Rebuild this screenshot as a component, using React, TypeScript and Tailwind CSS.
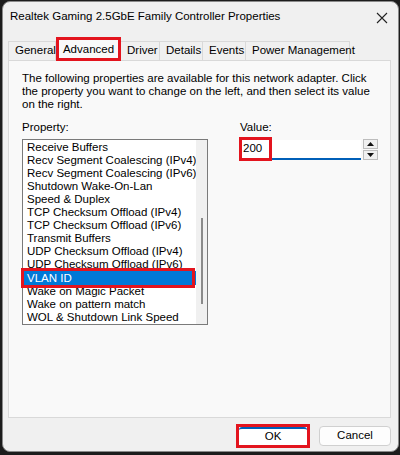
const items = [
  "Receive Buffers",
  "Recv Segment Coalescing (IPv4)",
  "Recv Segment Coalescing (IPv6)",
  "Shutdown Wake-On-Lan",
  "Speed & Duplex",
  "TCP Checksum Offload (IPv4)",
  "TCP Checksum Offload (IPv6)",
  "Transmit Buffers",
  "UDP Checksum Offload (IPv4)",
  "UDP Checksum Offload (IPv6)",
  "VLAN ID",
  "Wake on Magic Packet",
  "Wake on pattern match",
  "WOL & Shutdown Link Speed",
];

const tabs = [
  { name: "General", w: "w-[48px]" },
  { name: "Advanced", w: "w-[65px]", active: true },
  { name: "Driver", w: "w-[40px]" },
  { name: "Details", w: "w-[44px]" },
  { name: "Events", w: "w-[44px]" },
  { name: "Power Management", w: "w-[105px]" },
];

export default function App() {
  return (
    <div className="h-[455px] w-[400px] bg-[#1c1c1c] pb-[3px] pl-[2px] pr-[1px] pt-[1px] font-['Liberation_Sans',sans-serif] text-[11.5px] text-black">
      <div className="flex h-full flex-col rounded-[8px] border border-[#8a8a8a] bg-[#f0f0f0]">
        {/* title bar */}
        <div className="flex h-[30px] items-center justify-between pl-[7px] pr-[10px]">
          <span className="whitespace-nowrap text-[11.5px]">Realtek Gaming 2.5GbE Family Controller Properties</span>
          <svg width="12" height="12" viewBox="0 0 12 12" className="mt-[1px]">
            <path d="M1 1L11 11M11 1L1 11" stroke="#222" strokeWidth="1.1" />
          </svg>
        </div>

        {/* tabs */}
        <div className="ml-[5px] mt-[5px] flex h-[23px] items-end">
          {tabs.map((t) =>
            t.active ? (
              <div
                key={t.name}
                className={`relative z-10 -mb-[1px] flex h-[24px] ${t.w} items-start justify-center whitespace-nowrap border-[3px] border-[#e3141e] bg-[#f9f9f9] pt-[1px]`}
              >
                {t.name}
              </div>
            ) : (
              <div
                key={t.name}
                className={`-ml-[1px] flex h-[19px] ${t.w} items-center whitespace-nowrap border border-b-0 border-[#d9d9d9] bg-[#f0f0f0] pl-[6px] first:ml-0`}
              >
                {t.name}
              </div>
            )
          )}
        </div>

        {/* panel */}
        <div className="ml-[5px] mr-[7px] h-[358px] border border-[#d9d9d9] bg-[#f9f9f9] pl-[13px] pt-[11px]">
          <div className="leading-[13px]">
            <div className="whitespace-nowrap">The following properties are available for this network adapter. Click</div>
            <div className="whitespace-nowrap">the property you want to change on the left, and then select its value</div>
            <div className="whitespace-nowrap">on the right.</div>
          </div>

          <div className="mt-[10px] flex">
            <div className="w-[186px]">
              <div className="mb-[5px] leading-[13px]">Property:</div>
              <div className="flex h-[186px] border border-[#7a7a7a] bg-white">
                <div className="flex-1 pl-[1px] pt-[1px]">
                  {items.map((it) =>
                    it === "VLAN ID" ? (
                      <div
                        key={it}
                        className="relative h-[14px] bg-[#0078d7] pl-[3px] leading-[14px] text-white"
                      >
                        {it}
                        <div className="absolute -bottom-[3px] -left-[3px] -top-[3px] right-[1px] border-[3px] border-[#e3141e]" />
                      </div>
                    ) : (
                      <div key={it} className="h-[13px] whitespace-nowrap pl-[3px] leading-[13px]">
                        {it}
                      </div>
                    )
                  )}
                </div>
                <div className="flex w-[16px] justify-center bg-[#f0f0f0] pt-[78px]">
                  <div className="h-[86px] w-[2px] bg-[#8a8a8a]" />
                </div>
              </div>
            </div>

            <div className="ml-[32px]">
              <div className="mb-[5px] leading-[13px]">Value:</div>
              <div className="flex items-center">
                <div className="relative flex h-[20px] w-[121px] items-center border-b-2 border-[#005fb8] bg-white">
                  <div className="-ml-[1px] flex h-[24px] w-[33px] items-center border-[3px] border-[#e3141e] pl-[1px]">
                    200
                  </div>
                </div>
                <div className="ml-[2px] flex flex-col gap-[1px]">
                  <div className="flex h-[10px] w-[15px] items-center justify-center border border-[#bdbdbd] bg-[#f0f0f0]">
                    <svg width="7" height="4" viewBox="0 0 7 4">
                      <path d="M3.5 0L7 4H0Z" fill="#111" />
                    </svg>
                  </div>
                  <div className="flex h-[10px] w-[15px] items-center justify-center border border-[#bdbdbd] bg-[#f0f0f0]">
                    <svg width="7" height="4" viewBox="0 0 7 4">
                      <path d="M0 0H7L3.5 4Z" fill="#111" />
                    </svg>
                  </div>
                </div>
              </div>
            </div>
          </div>
        </div>

        {/* buttons */}
        <div className="mt-[6px] flex justify-end gap-[9px] pr-[7px]">
          <div className="flex h-[24px] w-[74px] items-center justify-center border-[3px] border-[#e3141e] bg-white">
            <div className="flex h-full w-full items-center justify-center rounded-[3px] border-t-2 border-[#005fb8]">OK</div>
          </div>
          <div className="mt-[2px] flex h-[20px] w-[72px] items-center justify-center rounded-[4px] border border-[#d0d0d0] bg-[#fdfdfd]">
            Cancel
          </div>
        </div>
      </div>
    </div>
  );
}
